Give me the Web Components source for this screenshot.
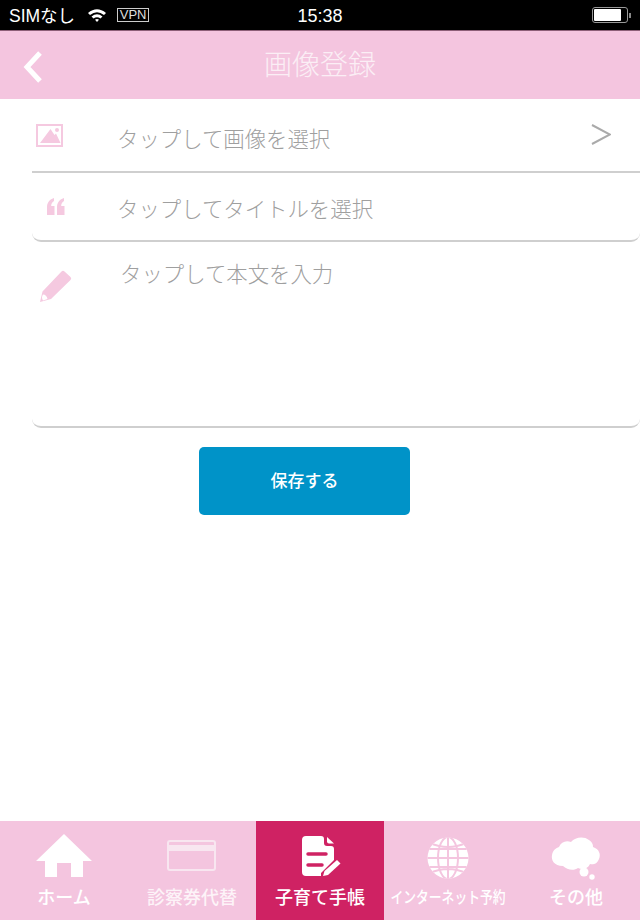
<!DOCTYPE html>
<html lang="ja">
<head>
<meta charset="utf-8">
<title>画像登録</title>
<style>
html,body{margin:0;padding:0;background:#fff}
body{width:640px;height:920px;overflow:hidden;font-family:"Noto Sans CJK JP","Noto Sans",sans-serif}
app-shell{height:920px}
</style>
</head>
<body>
<app-shell>
  <status-bar></status-bar>
  <page-header>画像登録</page-header>
  <main-form>
    <form-row kind="image" chevron>タップして画像を選択</form-row>
    <form-row kind="quote" rounded>タップしてタイトルを選択</form-row>
    <form-area>タップして本文を入力</form-area>
    <save-button>保存する</save-button>
  </main-form>
  <tab-bar>
    <tab-item kind="home">ホーム</tab-item>
    <tab-item kind="card" dim>診察券代替</tab-item>
    <tab-item kind="note" active>子育て手帳</tab-item>
    <tab-item kind="globe" small>インターネット予約</tab-item>
    <tab-item kind="cloud">その他</tab-item>
  </tab-bar>
</app-shell>
<script>
const ICONS = {
  image:`<svg width="28" height="24" viewBox="0 0 28 24"><rect x="1" y="1" width="25" height="21" fill="none" stroke="#f5c9e0" stroke-width="2"/><path d="M4 19 14.500 5l4 6 1.500-1.500 4.500 9.500z" fill="#f5c9e0"/><circle cx="21" cy="6" r="2" fill="#f5c9e0"/></svg>`,
  quote:`<svg width="20" height="18" viewBox="0 0 20 18"><path d="M1 17V9.500C1 5 3 1.500 8 0V3C6 4 5.200 6 5.200 8H8.500v9zM11 17V9.500C11 5 13 1.500 18 0V3C16 4 15.200 6 15.200 8H18.500v9z" fill="#f5c9e0"/></svg>`,
  pencil:`<svg width="34" height="34" viewBox="0 0 34 34"><path d="M1 33 3.500 22.500 22.500 2.500q1.500-1.500 3 0l6 5.500q1.500 1.500 0 3L12 30z" fill="#f5c9e0"/><path d="M4 25.500q3.500 0 4.500 4.500L4 31.500q-2-3 0-6z" fill="#fff"/></svg>`,
  home:`<svg width="56" height="44" viewBox="0 0 56 44"><path d="M28 0 56 27H47V43H35V29H21V43H9V27H0z" fill="#fff"/></svg>`,
  card:`<svg width="50" height="32" viewBox="0 0 50 32"><rect x="1" y="1" width="47" height="29" rx="2" fill="none" stroke="#f8e6f0" stroke-width="2"/><rect x="1" y="5" width="47" height="6" fill="#f8e6f0"/></svg>`,
  note:`<svg width="42" height="46" viewBox="0 0 42 46"><path d="M5 1H20Q23 1 23 4V8Q23 11 26 11H30Q33 11 33 14V25L20 38V41H5Q1 41 1 37V5Q1 1 5 1z" fill="#fff"/><path d="M26 2 33 8.500H28Q26 8.500 26 6.500z" fill="#fff"/><path d="M7 19H25" stroke="#cf2263" stroke-width="3.500" stroke-linecap="round"/><path d="M7 30H21" stroke="#cf2263" stroke-width="3.500" stroke-linecap="round"/><path d="M22 41l1.500-5L36 25l3.500 3.500L27 40z" fill="#fff"/></svg>`,
  globe:`<svg width="42" height="42" viewBox="0 0 42 42"><defs><clipPath id="g"><circle cx="21" cy="21" r="20.500"/></clipPath></defs><g clip-path="url(#g)"><rect width="42" height="42" fill="#fff"/><g fill="none" stroke="#f4c5df" stroke-width="2"><path d="M21 0V42M0 21H42M1 12H41M1 30H41M3 6Q21 14 39 6M3 36Q21 28 39 36"/><ellipse cx="21" cy="21" rx="10" ry="21"/></g></g></svg>`,
  cloud:`<svg width="50" height="44" viewBox="0 0 50 44"><path d="M12 30C3 30 0 24 1 19 2 14 5 12 8 11 10 6 15 4 20 6 24 1 33 0 38 4 42 7 42 9 42 11 48 13 50 18 48 23 46 28 42 29 39 28 37 33 31 34 27 32 23 35 16 34 12 30z" fill="#fff"/><circle cx="33" cy="36" r="4.500" fill="#fff"/><circle cx="41" cy="41" r="2.700" fill="#fff"/></svg>`
};
function def(name, css, html){
  customElements.define(name, class extends HTMLElement{
    connectedCallback(){
      if(this.shadowRoot) return;
      const r=this.attachShadow({mode:'open'});
      r.innerHTML=`<style>${css}</style>${typeof html==='function'?html(this):html}`;
    }
  });
}
def('app-shell',`:host{display:flex;flex-direction:column;width:640px}
  ::slotted(main-form){flex:1}`,`<slot></slot>`);
def('status-bar',`:host{display:flex;align-items:center;justify-content:space-between;height:30px;border-bottom:1px solid #8d5f78;background:#000;color:#fff;font:17.500px/30px "Liberation Sans",Arial,"Noto Sans CJK JP",sans-serif;position:relative;flex:none}
  .l{display:flex;align-items:center;padding-left:9px;padding-top:1px}
  .w{margin-left:12px;display:block;margin-top:-1px}
  .v{margin-left:10px;border:1px solid #ccc;font-size:13px;line-height:12px;height:12px;width:30px;text-align:center;color:#ddd;margin-top:-1px}
  .t{position:absolute;left:0;right:0;text-align:center;font-size:18px;padding-top:1px}
  .b{display:flex;align-items:center;padding-right:9px}
  .cell{width:36px;height:16px;border:1px solid #999;border-radius:3px;padding:1px;box-sizing:border-box}
  .cell i{display:block;height:100%;width:27px;background:#fff;border-radius:1px}
  .nub{width:2px;height:5px;background:#888;margin-left:1px}`,
  `<div class="l"><span>SIMなし</span>
   <svg class="w" width="20" height="14" viewBox="0 0 20 14"><path d="M1 5Q10-2.500 19 5L17 7Q10 1.500 3 7zM4.500 8.500Q10 4 15.500 8.500L13.500 10.500Q10 7.800 6.500 10.500zM8 11.800Q10 10.300 12 11.800L10 14z" fill="#fff"/></svg>
   <span class="v">VPN</span></div>
   <span class="t">15:38</span>
   <div class="b"><div class="cell"><i></i></div><div class="nub"></div></div>`);
def('page-header',`:host{display:flex;align-items:center;justify-content:center;height:68px;box-sizing:border-box;padding-bottom:4px;background:#f4c5df;color:#fbeef5;font-size:28px;font-weight:300;position:relative;flex:none}
  svg{position:absolute;left:23px;top:20px}`,
  `<svg width="20" height="32" viewBox="0 0 20 32"><path d="M17 2 4 16 17 30" fill="none" stroke="#fff" stroke-width="5"/></svg><slot></slot>`);
def('main-form',`:host{display:flex;flex-direction:column;padding-left:32px}`,`<slot></slot>`);
def('form-row',`:host{display:flex;align-items:center;height:74px;box-sizing:border-box;border-bottom:2px solid #cfcfcf;color:#9f9f9f;font-size:21.400px;font-weight:300;position:relative}
  :host([rounded]){height:69px;border-radius:0 0 9px 9px}
  .ic{width:85px;display:flex;justify-content:flex-start;flex:none}
  .ic svg{margin-left:4px}
  :host([kind=quote]) .ic svg{margin-left:14px;margin-top:1px}
  :host([kind=image]) .ic svg{margin-top:2px}
  .tx{flex:1;padding-top:5px}
  :host([rounded]) .tx{padding-top:2px}
  .ch{position:absolute;left:559px;top:25px}`,
  (el)=>`<span class="ic">${ICONS[el.getAttribute('kind')]}</span><span class="tx"><slot></slot></span>${el.hasAttribute('chevron')?`<svg class="ch" width="20" height="22" viewBox="0 0 20 22"><path d="M1 1 19 10.500 1 20" fill="none" stroke="#aaa" stroke-width="2"/></svg>`:''}`);
def('form-area',`:host{display:flex;height:185px;box-sizing:border-box;border-bottom:2px solid #cfcfcf;border-radius:0 0 9px 9px;color:#9f9f9f;font-size:21.400px;font-weight:300;padding-top:14px;margin-top:1px}
  .ic{width:88px;padding-left:7px;box-sizing:border-box;padding-top:12px;flex:none}
  .tx{line-height:34px;margin-top:-1px}`,
  `<span class="ic">${ICONS.pencil}</span><span class="tx"><slot></slot></span>`);
def('save-button',`:host{display:flex;align-items:center;justify-content:center;align-self:flex-start;width:211px;height:68px;box-sizing:border-box;padding-bottom:4px;margin:19px 0 0 167px;background:#0093c8;border-radius:5px;color:#fff;font-size:17px;font-weight:500}`,`<slot></slot>`);
def('tab-bar',`:host{display:grid;grid-template-columns:repeat(5,128px);height:99px;background:#f4c5df;flex:none}`,`<slot></slot>`);
def('tab-item',`:host{display:flex;flex-direction:column;align-items:center;height:99px;position:relative;color:#fff;font-size:18px;font-weight:500;white-space:nowrap}
  :host([active]){background:#cf2263}
  :host([dim]){color:#fdf3f8}
  .i{height:67px;display:flex;align-items:flex-start;justify-content:center;width:100%;box-sizing:border-box}
  :host([kind=home]) .i{padding-top:13px}
  :host([kind=card]) .i{padding-top:19px}
  :host([kind=note]) .i{padding-top:14px;padding-left:4px}
  :host([kind=globe]) .i{padding-top:16px}
  :host([kind=cloud]) .i{padding-top:15px}
  .l{line-height:24px;margin-top:-4px}
  :host([small]) .l{font-size:16px;transform:scaleX(.8)}`,
  (el)=>`<div class="i">${ICONS[el.getAttribute('kind')]}</div><div class="l"><slot></slot></div>`);
</script>
</body>
</html>
